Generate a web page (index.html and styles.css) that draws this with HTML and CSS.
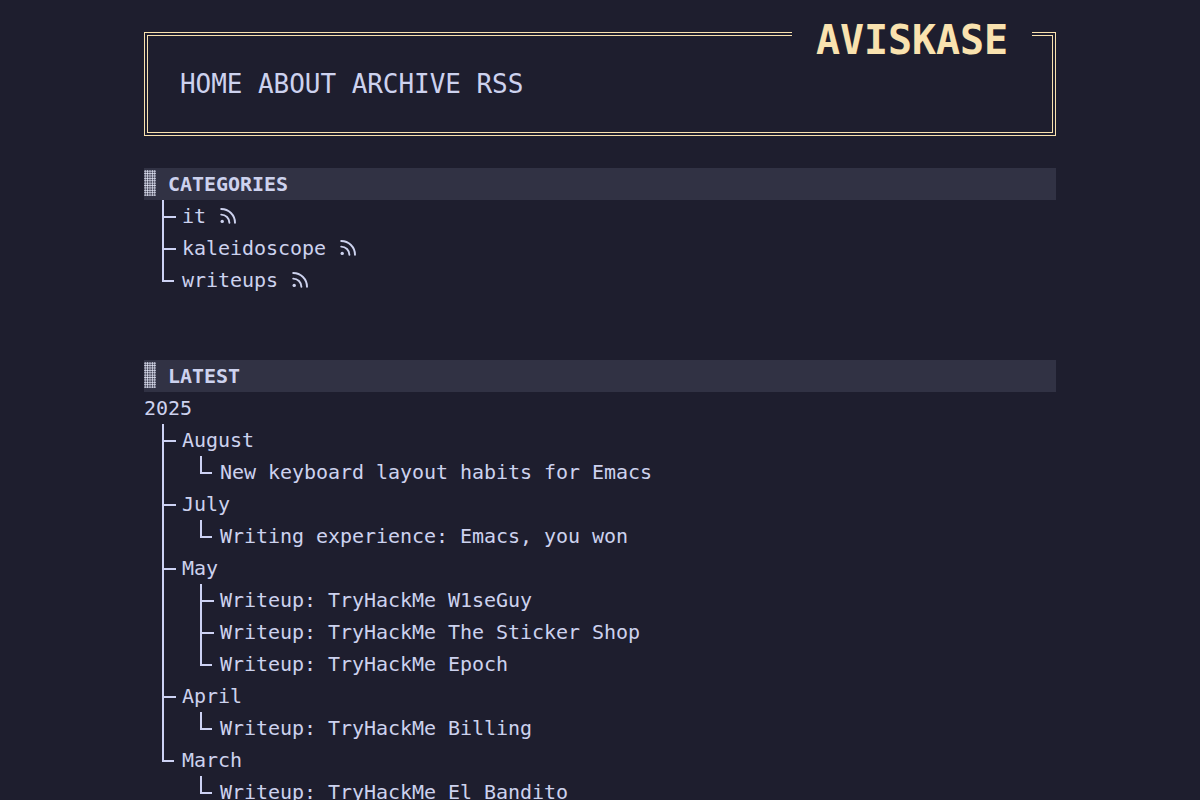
FILE: index.html
```html
<!DOCTYPE html>
<html lang="en">

<head>
    <meta charset="UTF-8">
    <meta name="viewport" content="width=device-width, initial-scale=1.0">
    <title>AVISKASE</title>
    <link rel="stylesheet" href="styles.css">
</head>

<body>
    <svg class="sprite" aria-hidden="true">
        <symbol id="rss" viewBox="0 0 18 18">
            <circle cx="3.2" cy="14.4" r="1.7" />
            <path d="M2.2 7.6a8.2 8.2 0 0 1 8.2 8.2M2.2 2A13.8 13.8 0 0 1 16 15.8" />
        </symbol>
    </svg>
    <div class="container">
        <header class="site-header">
            <h1 class="site-title">AVISKASE</h1>
            <nav>
                <ul class="menu">
                    <li><a href="/">HOME</a></li>
                    <li><a href="/about/">ABOUT</a></li>
                    <li><a href="/archive/">ARCHIVE</a></li>
                    <li><a href="/index.xml">RSS</a></li>
                </ul>
            </nav>
        </header>
        <main>
            <section class="categories">
                <h2>CATEGORIES</h2>
                <ul class="tree">
                    <li><a href="/it/">it</a> <a href="/it/index.xml"><svg class="rss"><use href="#rss" /></svg></a></li>
                    <li><a href="/kaleidoscope/">kaleidoscope</a> <a href="/kaleidoscope/index.xml"><svg class="rss"><use href="#rss" /></svg></a></li>
                    <li><a href="/writeups/">writeups</a> <a href="/writeups/index.xml"><svg class="rss"><use href="#rss" /></svg></a></li>
                </ul>
            </section>
            <section class="latest">
                <h2>LATEST</h2>
                <p>2025</p>
                <ul class="tree">
                    <li>August
                        <ul>
                            <li><a href="#">New keyboard layout habits for Emacs</a></li>
                        </ul>
                    </li>
                    <li>July
                        <ul>
                            <li><a href="#">Writing experience: Emacs, you won</a></li>
                        </ul>
                    </li>
                    <li>May
                        <ul>
                            <li><a href="#">Writeup: TryHackMe W1seGuy</a></li>
                            <li><a href="#">Writeup: TryHackMe The Sticker Shop</a></li>
                            <li><a href="#">Writeup: TryHackMe Epoch</a></li>
                        </ul>
                    </li>
                    <li>April
                        <ul>
                            <li><a href="#">Writeup: TryHackMe Billing</a></li>
                        </ul>
                    </li>
                    <li>March
                        <ul>
                            <li><a href="#">Writeup: TryHackMe El Bandito</a></li>
                        </ul>
                    </li>
                </ul>
            </section>
        </main>
    </div>
</body>

</html>
```
FILE: styles.css
```css
*,
*::before {
    box-sizing: border-box;
}

html {
    scrollbar-width: none;
}

body {
    margin: 0;
    background-color: #1e1e2e;
    color: #cdd2ee;
    font-family: "DejaVu Sans Mono", monospace;
    font-size: 20px;
    line-height: 32px;
    letter-spacing: -0.04px;
}

a {
    color: inherit;
    text-decoration: none;
}

ul {
    list-style: none;
    margin: 0;
    padding: 0;
}

p {
    margin: 0;
}

.sprite {
    display: none;
}

.container {
    width: 912px;
    margin: 0 auto;
    padding-top: 32px;
}

.site-header {
    position: relative;
    height: 104px;
    padding: 32px;
    border: 4px double #f9e2af;
}

/* sits over the top border and hides a piece of it */
.site-title {
    position: absolute;
    top: -12px;
    right: 20px;
    margin: 0;
    padding: 0 24px;
    background-color: #1e1e2e;
    color: #f9e2af;
    font-size: 40px;
    line-height: 32px;
    letter-spacing: -0.08px;
}

.menu {
    display: flex;
    gap: 15.6px;
    font-size: 26px;
    line-height: 32px;
    letter-spacing: -0.05px;
}

h2 {
    display: flex;
    align-items: center;
    gap: 12px;
    margin: 32px 0 0;
    background-color: #313244;
    font-size: 20px;
    line-height: 32px;
}

h2::before {
    content: "";
    width: 12px;
    height: 26px;
    margin-bottom: 2px;
    background-image: radial-gradient(circle, #e4e7f8 0.7px, transparent 1.2px);
    background-size: 2.4px 2.4px;
}

.latest h2 {
    margin-top: 64px;
}

/* tree branches */
.tree,
.tree ul {
    padding-left: 18px;
}

.tree li {
    position: relative;
    padding-left: 20px;
}

.tree li::before {
    content: "";
    position: absolute;
    top: 0;
    left: 0;
    width: 12px;
    height: 18px;
    border-left: 2px solid #cdd2f4;
    border-bottom: 2px solid #cdd2f4;
}

.tree li:not(:last-child) {
    padding-left: 18px;
    border-left: 2px solid #cdd2f4;
}

.tree li:not(:last-child)::before {
    left: -2px;
    width: 14px;
}

.rss {
    width: 18px;
    height: 18px;
    margin-left: 1px;
    vertical-align: -2px;
    fill: #cdd2ee;
}

.sprite path {
    fill: none;
    stroke: #cdd2ee;
    stroke-width: 1.9;
    stroke-linecap: round;
}
```
